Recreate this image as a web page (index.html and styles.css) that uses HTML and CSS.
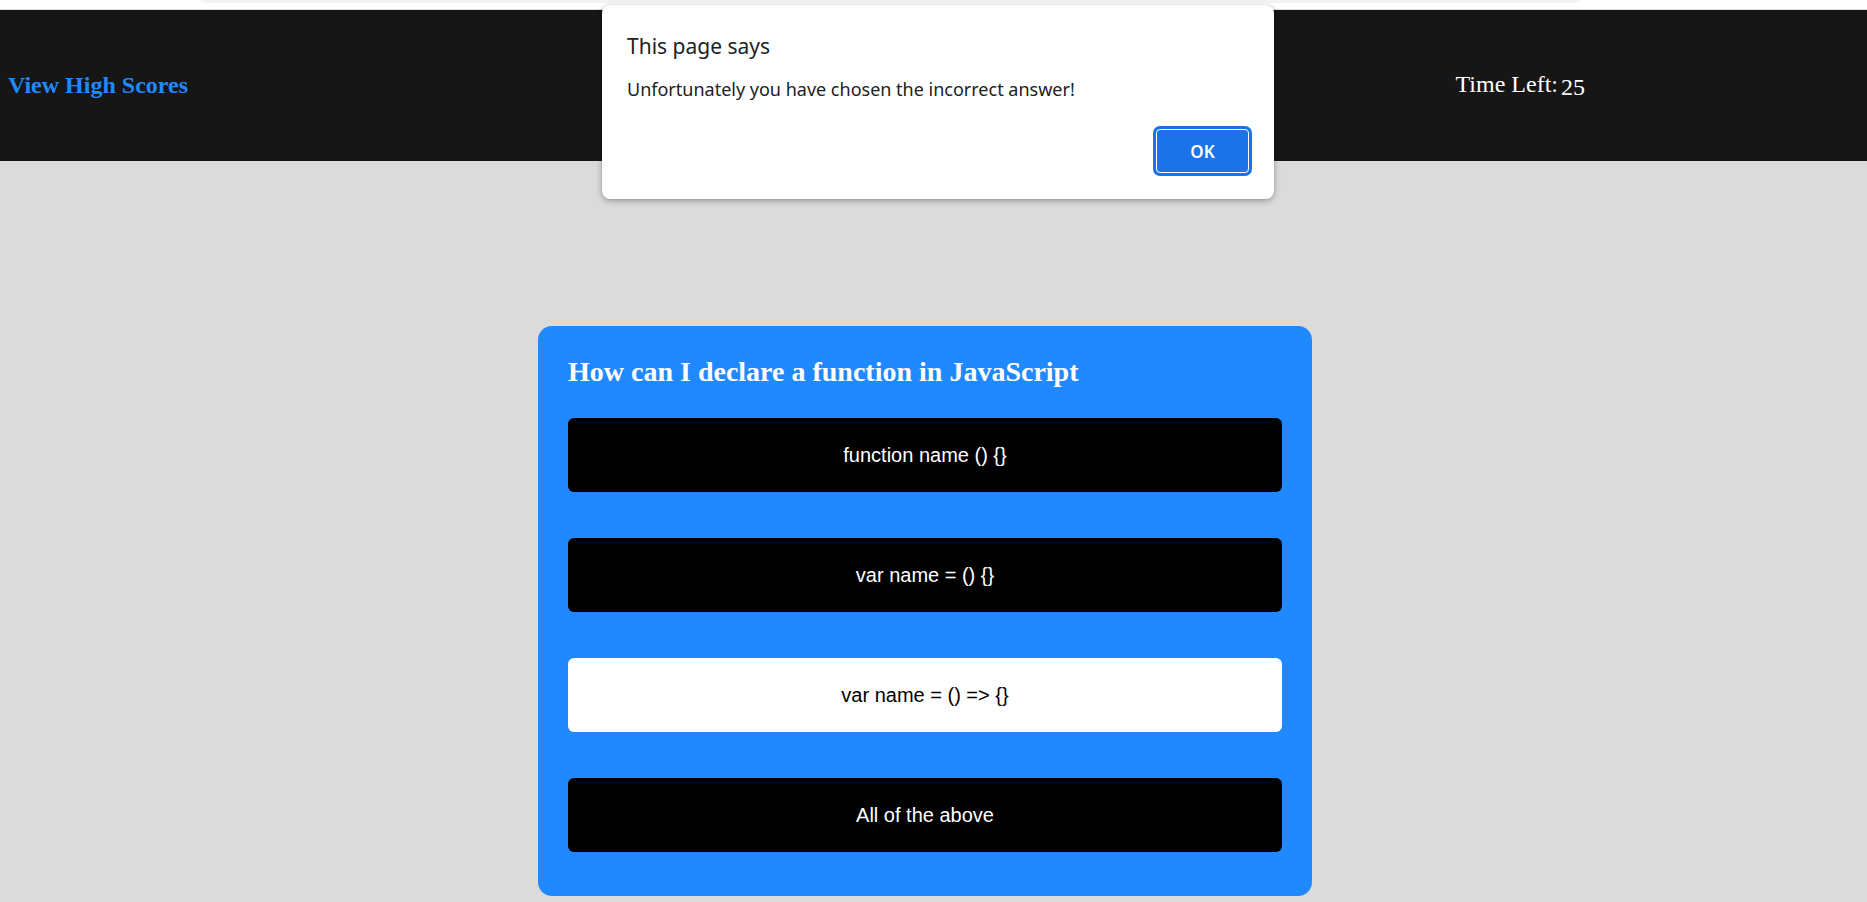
FILE: index.html
```html
<!DOCTYPE html>
<html lang="en">
<head>
<meta charset="utf-8">
<title>Code Quiz</title>
<link rel="stylesheet" href="styles.css">
</head>
<body>
<div class="chrome"><div class="chrome-bar"></div></div>
<header class="topbar">
  <a class="scores" href="#">View High Scores</a>
  <div class="timer"><span class="timer-label">Time Left:</span><span class="timer-count">25</span></div>
</header>
<main class="stage">
  <section class="card">
    <h2 class="question">How can I declare a function in JavaScript</h2>
    <div class="answers">
      <button class="answer">function name () {}</button>
      <button class="answer">var name = () {}</button>
      <button class="answer answer-picked">var name = () =&gt; {}</button>
      <button class="answer">All of the above</button>
    </div>
  </section>
</main>
<div class="dialog" role="alertdialog">
  <div class="dialog-title">This page says</div>
  <div class="dialog-text">Unfortunately you have chosen the incorrect answer!</div>
  <div class="dialog-actions"><button class="dialog-ok">OK</button></div>
</div>
</body>
</html>
```
FILE: styles.css
```css
html, body {
  margin: 0;
  padding: 0;
}
body {
  background: #dbdbdb;
  font-family: "Liberation Serif", "Times New Roman", serif;
  height: 902px;
  overflow: hidden;
  position: relative;
}
.chrome {
  height: 9px;
  background: #ffffff;
  border-bottom: 1px solid #dcdcdc;
  padding-left: 200px;
  padding-right: 287px;
}
.chrome-bar {
  height: 3px;
  background: #f1f3f4;
  border-radius: 0 0 10px 10px / 0 0 3px 3px;
}
.topbar {
  height: 151px;
  background: #161616;
  display: flex;
  align-items: center;
  justify-content: space-between;
  padding: 0 282px 0 8px;
}
.scores {
  color: #2189ff;
  font-weight: bold;
  font-size: 24px;
  text-decoration: none;
}
.timer {
  color: #ffffff;
  font-size: 24px;
  white-space: nowrap;
}
.timer-label {
  vertical-align: 3px;
}
.timer-count {
  margin-left: 3px;
}
.stage {
  display: flex;
  justify-content: center;
  padding: 165px 17px 0 0;
}
.card {
  width: 714px;
  background: #2189ff;
  border-radius: 14px;
  padding: 30px 30px 44px;
}
.question {
  margin: 0 0 30px;
  color: #ffffff;
  font-size: 28px;
  line-height: 32px;
  font-weight: bold;
}
.answers {
  display: flex;
  flex-direction: column;
  gap: 46px;
}
.answer {
  height: 74px;
  border: none;
  border-radius: 6px;
  background: #000000;
  color: #ffffff;
  font-family: "Liberation Sans", Arial, sans-serif;
  font-size: 20px;
  padding: 0;
  cursor: pointer;
}
.answer-picked {
  background: #ffffff;
  color: #000000;
}
.dialog {
  position: absolute;
  left: 602px;
  top: 5px;
  width: 672px;
  height: 194px;
  box-sizing: border-box;
  background: #ffffff;
  border-radius: 8px;
  box-shadow: 0 2px 6px rgba(0, 0, 0, 0.3), 0 0 1px rgba(0, 0, 0, 0.25);
  padding: 27px 25px 0 25px;
  font-family: "Noto Sans", "Open Sans", sans-serif;
  color: #202124;
}
.dialog-title {
  font-size: 21px;
  line-height: 28px;
}
.dialog-text {
  margin-top: 17px;
  font-size: 18px;
  line-height: 24px;
}
.dialog-actions {
  display: flex;
  justify-content: flex-end;
  margin-top: 28px;
}
.dialog-ok {
  width: 93px;
  height: 44px;
  box-sizing: border-box;
  background: #1a73e8;
  color: #ffffff;
  border: 1px solid #ffffff;
  border-radius: 4px;
  box-shadow: 0 0 0 3px #1a73e8;
  font-family: "Noto Sans", "Open Sans", sans-serif;
  font-size: 17px;
  font-weight: 600;
}
```
